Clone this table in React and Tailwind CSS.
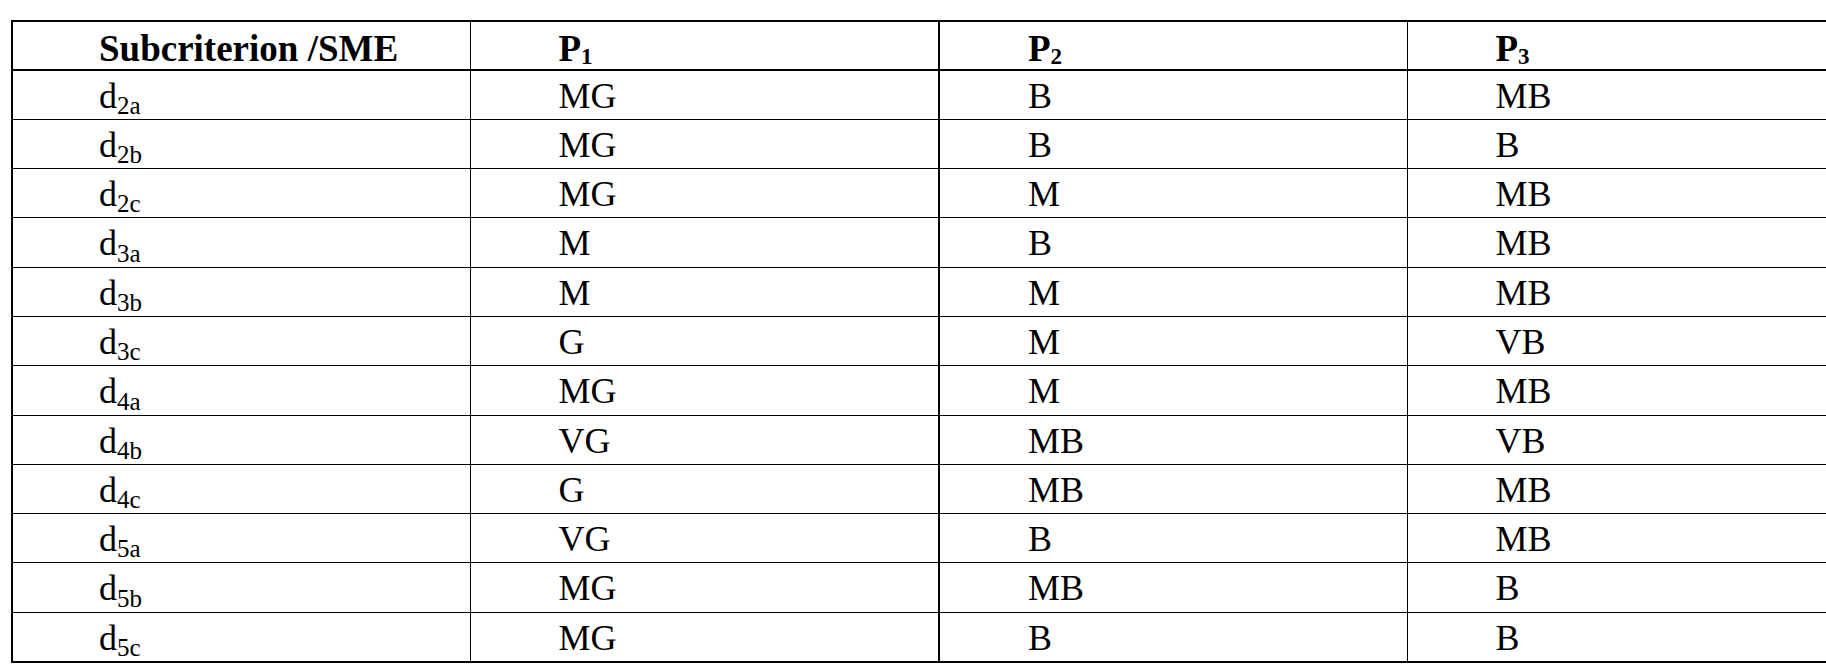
const rows = [
  ["2a", "MG", "B", "MB"],
  ["2b", "MG", "B", "B"],
  ["2c", "MG", "M", "MB"],
  ["3a", "M", "B", "MB"],
  ["3b", "M", "M", "MB"],
  ["3c", "G", "M", "VB"],
  ["4a", "MG", "M", "MB"],
  ["4b", "VG", "MB", "VB"],
  ["4c", "G", "MB", "MB"],
  ["5a", "VG", "B", "MB"],
  ["5b", "MG", "MB", "B"],
  ["5c", "MG", "B", "B"],
];

const font = { fontFamily: '"Liberation Serif", "Times New Roman", serif' };

export default function App() {
  return (
    <div className="w-full h-[672px] overflow-hidden bg-white text-black" style={font}>
      <table className="table-fixed border-collapse ml-[11px] mt-[20px] w-[1864px]">
        <colgroup>
          <col className="w-[458px]" />
          <col className="w-[469px]" />
          <col className="w-[468px]" />
          <col className="w-[469px]" />
        </colgroup>
        <thead>
          <tr className="h-[49px] border-t-2 border-b-2 border-black">
            <th className="border-l-2 border-black text-left align-top pl-[86px] pt-[8px] text-[37px] leading-none font-bold">
              Subcriterion /SME
            </th>
            <th className="border-l border-black text-left align-top pl-[88px] pt-[8px] text-[37px] leading-none font-bold">
              P<sub className="text-[23px] -bottom-[3px]">1</sub>
            </th>
            <th className="border-l-2 border-black text-left align-top pl-[88px] pt-[8px] text-[37px] leading-none font-bold">
              P<sub className="text-[23px] -bottom-[3px]">2</sub>
            </th>
            <th className="border-l border-black text-left align-top pl-[88px] pt-[8px] text-[37px] leading-none font-bold">
              P<sub className="text-[23px] -bottom-[3px]">3</sub>
            </th>
          </tr>
        </thead>
        <tbody>
          {rows.map((r, i) => (
            <tr
              key={r[0]}
              className={`h-[49.3px] border-black ${i === rows.length - 1 ? "border-b-2" : "border-b"}`}
            >
              <td className="border-l-2 border-black align-top pl-[86px] pt-[7px] text-[36px] leading-none">
                d<sub className="text-[25px]">{r[0]}</sub>
              </td>
              <td className="border-l border-black align-top pl-[88px] pt-[7px] text-[36px] leading-none">
                {r[1]}
              </td>
              <td className="border-l-2 border-black align-top pl-[88px] pt-[7px] text-[36px] leading-none">
                {r[2]}
              </td>
              <td className="border-l border-black align-top pl-[88px] pt-[7px] text-[36px] leading-none">
                {r[3]}
              </td>
            </tr>
          ))}
        </tbody>
      </table>
    </div>
  );
}
